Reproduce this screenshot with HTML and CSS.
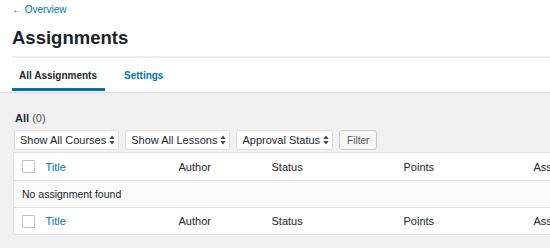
FILE: index.html
```html
<!DOCTYPE html>
<html lang="en">
<head>
    <meta charset="UTF-8">
    <meta name="viewport" content="width=device-width, initial-scale=1.0">
    <title>Assignments</title>
    <link rel="stylesheet" href="styles.css">
</head>
<body>
    <div class="header">
        <a class="back-link" href="#">&larr; Overview</a>
        <h1 class="title">Assignments</h1>
        <div class="tabs">
            <a class="tab active" href="#">All Assignments</a>
            <a class="tab" href="#">Settings</a>
        </div>
    </div>
    <div class="content">
        <div class="views"><b>All</b> <span class="count">(0)</span></div>
        <div class="filters">
            <button class="select">Show All Courses <svg width="6" height="10" viewBox="0 0 6 10"><path d="M3 0.5L5.6 4H0.4z M3 9.5L5.6 6H0.4z" fill="#444"/></svg></button>
            <button class="select">Show All Lessons <svg width="6" height="10" viewBox="0 0 6 10"><path d="M3 0.5L5.6 4H0.4z M3 9.5L5.6 6H0.4z" fill="#444"/></svg></button>
            <button class="select">Approval Status <svg width="6" height="10" viewBox="0 0 6 10"><path d="M3 0.5L5.6 4H0.4z M3 9.5L5.6 6H0.4z" fill="#444"/></svg></button>
            <button class="filter-btn">Filter</button>
        </div>
        <table class="list">
            <colgroup>
                <col style="width: 22px">
                <col style="width: 133px">
                <col style="width: 93px">
                <col style="width: 132px">
                <col style="width: 130px">
                <col style="width: 150px">
            </colgroup>
            <thead>
                <tr>
                    <td class="cb"><span class="checkbox"></span></td>
                    <th><a href="#">Title</a></th>
                    <th>Author</th>
                    <th>Status</th>
                    <th>Points</th>
                    <th>Assigned</th>
                </tr>
            </thead>
            <tbody>
                <tr class="empty">
                    <td colspan="6">No assignment found</td>
                </tr>
            </tbody>
            <tfoot>
                <tr>
                    <td class="cb"><span class="checkbox"></span></td>
                    <th><a href="#">Title</a></th>
                    <th>Author</th>
                    <th>Status</th>
                    <th>Points</th>
                    <th>Assigned</th>
                </tr>
            </tfoot>
        </table>
    </div>
</body>
</html>
```

FILE: styles.css
```css
body {
    font-family: "Liberation Sans", Arial, sans-serif;
    margin: 0;
    background: #f1f1f1;
    color: #23282d;
    overflow: hidden;
    height: 248px;
}

a {
    color: #0073aa;
    text-decoration: none;
}

.header {
    background: #fff;
    padding-left: 12px;
    border-bottom: 1px solid #dcdcdc;
}

.back-link {
    display: block;
    font-size: 10px;
    line-height: 13px;
    padding-top: 3px;
}

.title {
    margin: 0;
    font-size: 18.5px;
    line-height: 22px;
    padding: 11px 0 7px;
    border-bottom: 2px solid #eee;
    font-weight: bold;
    color: #1d2327;
}

.tabs {
    display: flex;
    gap: 12px;
    height: 34px;
}

.tab {
    font-size: 10px;
    font-weight: bold;
    padding: 12px 8px 0 7px;
    color: #0073aa;
}

.tab.active {
    color: #23282d;
    border-bottom: 3px solid #0073aa;
    height: 18px;
}

.content {
    padding: 0 0 0 13px;
}

.views {
    font-size: 11px;
    padding: 18px 0 0 2px;
    line-height: 14px;
}

.views .count {
    color: #555;
}

.filters {
    display: flex;
    gap: 6px;
    margin-top: 5px;
    padding-left: 1px;
}

.select,
.filter-btn {
    font-family: inherit;
    font-size: 11px;
    height: 20px;
    background: #fff;
    border: 1px solid #ddd;
    border-radius: 3px;
    color: #23282d;
    padding: 0 3px 0 5px;
    display: flex;
    align-items: center;
    gap: 3px;
}

.filter-btn {
    background: #f7f7f7;
    color: #555;
    font-size: 10px;
    padding: 0 7px;
    border-color: #ccc;
}

.list {
    margin-top: 2px;
    border-collapse: collapse;
    table-layout: fixed;
    width: 660px;
    background: #fff;
    border: 1px solid #e1e1e1;
    font-size: 11px;
}

.list th,
.list td {
    text-align: left;
    font-weight: normal;
    padding: 0 0 0 10px;
    color: #23282d;
}

.list thead tr {
    height: 28px;
    border-bottom: 1px solid #e1e1e1;
}

.list tfoot tr {
    height: 27px;
    border-top: 1px solid #e1e1e1;
}

.list td.cb {
    padding: 0 0 0 8px;
}

.checkbox {
    display: block;
    width: 11px;
    height: 11px;
    border: 1px solid #c3c4c7;
    border-radius: 1px;
    background: #fff;
}

.empty td {
    background: #f9f9f9;
    height: 26px;
    padding-left: 8px;
    font-size: 10.5px;
}
```
